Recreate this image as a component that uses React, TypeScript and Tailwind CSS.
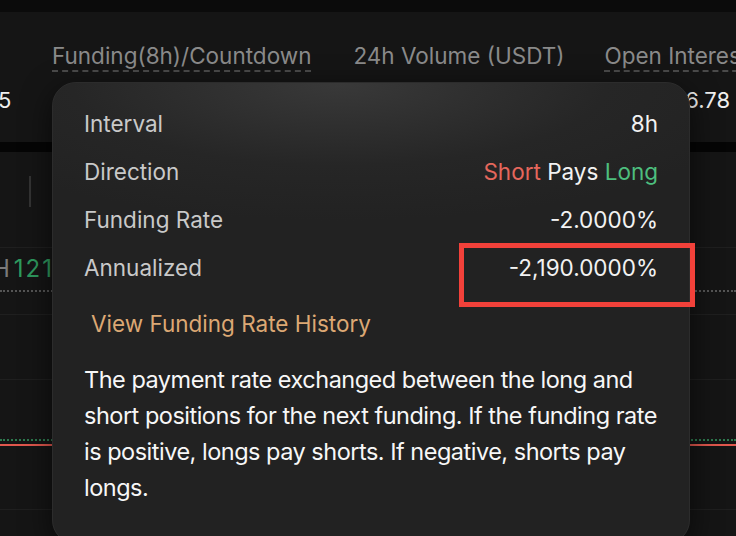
export default function App() {
    const rows = [
        { label: 'Interval', value: <span className="text-[#f2f2f2]">8h</span> },
        {
            label: 'Direction',
            value: (
                <span>
                    <span className="text-[#e5675c]">Short</span>{' '}
                    <span className="text-[#f2f2f2]">Pays</span>{' '}
                    <span className="text-[#4dbf7e]">Long</span>
                </span>
            ),
        },
        { label: 'Funding Rate', value: <span className="text-[#f2f2f2]">-2.0000%</span> },
        { label: 'Annualized', value: <span className="text-[#f2f2f2]">-2,190.0000%</span> },
    ];

    return (
        <div className="relative w-[736px] h-[536px] overflow-hidden bg-[#151515] font-['Inter',sans-serif]">
            <div className="h-[12px] bg-[#0b0b0b]" />

            {/* ticker header */}
            <div className="h-[130px] relative">
                <div className="flex items-center h-[62px] pt-[28px] text-[22.5px] text-[#8a8a8a] whitespace-nowrap">
                    <span className="ml-[52px] border-b-2 border-dashed border-[#4a4a4a] leading-[28px]">
                        Funding(8h)/Countdown
                    </span>
                    <span className="ml-[42px] leading-[28px] border-b-2 border-transparent">24h Volume (USDT)</span>
                    <span className="ml-[40px] border-b-2 border-dashed border-[#4a4a4a] leading-[28px]">
                        Open Interest
                    </span>
                </div>
                <div className="flex justify-between items-center h-[52px] text-[22px] text-[#f0f0f0]">
                    <span className="-ml-[2px]">5</span>
                    <span className="mr-[6px]">6.78</span>
                </div>
            </div>
            <div className="h-[10px] bg-[#050505]" />

            {/* lower panel */}
            <div className="relative">
                <div className="h-[96px] border-b border-[#1f1f1f] pt-[24px] pl-[29px]">
                    <div className="w-[2px] h-[31px] bg-[#333]" />
                </div>
                <div className="h-[42px] flex items-center text-[24px] leading-none">
                    <span className="text-[#7a7a7a] -ml-[8px]">H</span>
                    <span className="text-[#2e9a5e] ml-[4px] tracking-[2px]">121</span>
                </div>
                <div className="border-t-2 border-dotted border-[#555]" />
                <div className="h-[23px] border-b border-[#1f1f1f]" />
                <div className="h-[65px] border-b border-[#1f1f1f]" />
                <div className="h-[59px]" />
                <div className="border-t-2 border-dotted border-[#2c7a4e]" />
                <div className="h-[3px]" />
                <div className="h-[2px] bg-[#e0574d]" />
                <div className="h-[64px] border-b border-[#1f1f1f]" />
            </div>

            {/* tooltip */}
            <div className="absolute left-[52px] top-[82px] w-[638px] h-[462px] rounded-[24px] border border-[#2c2c2c] bg-[radial-gradient(ellipse_70%_30%_at_45%_0%,#393939,#262626_60%,#222222)] shadow-[0_8px_30px_rgba(0,0,0,0.6)] px-[31px] pt-[17px]">
                {rows.map((r) => (
                    <div key={r.label} className="flex justify-between items-center h-[48px] text-[22.5px]">
                        <span className="text-[#c9c9c9]">{r.label}</span>
                        {r.value}
                    </div>
                ))}
                <div className="h-[8px]" />
                <div className="h-[48px] flex items-center pl-[7px] text-[22.5px] text-[#dca874]">
                    View Funding Rate History
                </div>
                <p className="mt-[14px] text-[23.5px] leading-[36px] text-[#f7f7f7] tracking-[-0.5px] whitespace-nowrap">
                    The payment rate exchanged between the long and
                    <br />
                    short positions for the next funding. If the funding rate
                    <br />
                    is positive, longs pay shorts. If negative, shorts pay
                    <br />
                    longs.
                </p>
            </div>

            {/* highlight box */}
            <div className="absolute left-[459px] top-[243px] w-[236px] h-[64px] border-[5px] border-[#f2413a]" />
        </div>
    );
}
